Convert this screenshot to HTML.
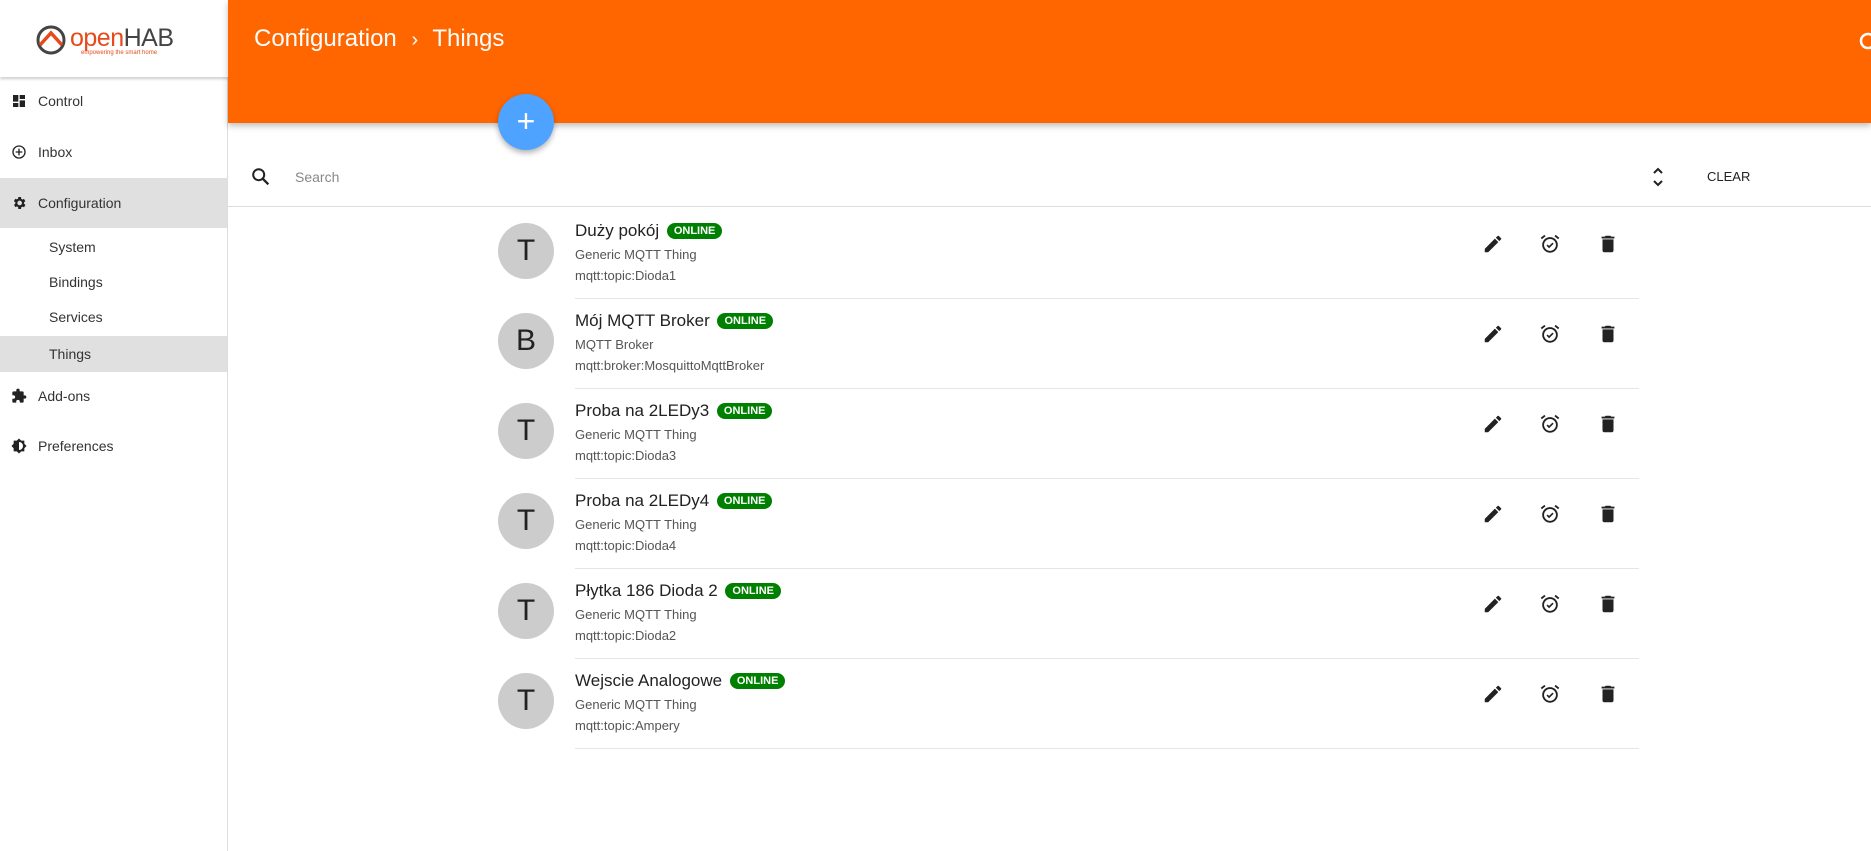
<!DOCTYPE html>
<html><head><meta charset="utf-8"><style>
*{box-sizing:border-box;margin:0;padding:0}
body{width:1871px;height:851px;overflow:hidden;background:#fff;font-family:"Liberation Sans",sans-serif;position:relative;color:#212121}
.abs{position:absolute}
#side{left:0;top:0;width:228px;height:851px;border-right:1px solid #ddd;background:#fff}
#logo{left:0;top:0;width:228px;height:77px;box-shadow:0 2px 3px rgba(0,0,0,.2);background:#fff}
.si{position:absolute;left:0;width:227px;font-size:14px;color:#333;display:flex;align-items:center}
.si svg{position:absolute;left:11px}
.si span{position:absolute;left:38px}
.sub span{left:49px}
#hdr{left:228px;top:0;width:1643px;height:123px;background:#ff6600;box-shadow:0 3px 6px rgba(0,0,0,.25)}
#title{left:254px;top:25px;color:#fff;font-size:24px;font-weight:300}
#fab{left:498px;top:94px;width:56px;height:56px;border-radius:50%;background:#4da3ff;box-shadow:0 3px 6px rgba(0,0,0,.3);color:#fff;font-size:32px;text-align:center;line-height:54px;font-weight:300}
.row{position:absolute;left:498px;width:1141px;height:90px}
.av{position:absolute;left:0;top:14px;width:56px;height:56px;border-radius:50%;background:#ccc;color:#222;font-size:30px;text-align:center;line-height:56px;font-weight:300}
.t{position:absolute;left:77px;top:12px;font-size:17px;color:#222;white-space:nowrap}
.b{display:inline-block;background:#008000;color:#fff;font-size:11px;font-weight:bold;border-radius:9px;padding:2px 7px;vertical-align:2px;margin-left:3px}
.s1{position:absolute;left:77px;top:38px;font-size:13px;color:#555}
.s2{position:absolute;left:77px;top:59px;font-size:13px;color:#555}
.ln{position:absolute;left:77px;right:0;bottom:0;height:1px;background:#e6e6e6}
.ic{position:absolute;top:24px}
</style></head><body>
<div id="side" class="abs">
<div id="logo" class="abs">
<svg class="abs" style="left:35px;top:24px" width="32" height="32" viewBox="0 0 32 32"><circle cx="16" cy="16" r="13" fill="none" stroke="#444" stroke-width="3"/><path d="M5 21 L16 9 L27 21" fill="none" stroke="#e64a19" stroke-width="3.5"/></svg>
<div class="abs" style="left:70px;top:24px;font-size:25px;color:#444;letter-spacing:-0.5px"><span style="color:#e64a19">open</span>HAB</div>
<div class="abs" style="left:81px;top:50px;font-size:6px;color:#e64a19">empowering the smart home</div>
</div>
<div class="si" style="top:88px;height:26px"><svg width="16" height="16" viewBox="0 0 24 24"><path d="M3 13h8V3H3zm0 8h8v-6H3zm10 0h8V11h-8zm0-18v6h8V3z" fill="#222"/></svg><span>Control</span></div>
<div class="si" style="top:139px;height:26px"><svg width="16" height="16" viewBox="0 0 24 24"><circle cx="12" cy="12" r="9" fill="none" stroke="#222" stroke-width="2"/><path d="M12 7v10M7 12h10" stroke="#222" stroke-width="2"/></svg><span>Inbox</span></div>
<div class="si" style="top:178px;height:50px;background:#e0e0e0"><svg width="16" height="16" viewBox="0 0 24 24"><path d="M19.4 13a7.5 7.5 0 0 0 0-2l2.1-1.6-2-3.5-2.5 1a7 7 0 0 0-1.7-1L15 3h-4l-.4 2.6a7 7 0 0 0-1.700 1l-2.5-1-2 3.5L6.6 11a7.5 7.5 0 0 0 0 2l-2.1 1.6 2 3.5 2.5-1a7 7 0 0 0 1.7 1L11 21h4l.4-2.6a7 7 0 0 0 1.7-1l2.5 1 2-3.5zM13 15.5a3.5 3.5 0 1 1 0-7 3.5 3.5 0 0 1 0 7z" fill="#222"/></svg><span>Configuration</span></div>
<div class="si sub" style="top:234px;height:26px"><span>System</span></div>
<div class="si sub" style="top:269px;height:26px"><span>Bindings</span></div>
<div class="si sub" style="top:304px;height:26px"><span>Services</span></div>
<div class="si sub" style="top:336px;height:36px;background:#e0e0e0"><span>Things</span></div>
<div class="si" style="top:383px;height:26px"><svg width="16" height="16" viewBox="0 0 24 24"><path d="M20.5 11H19V7a2 2 0 0 0-2-2h-4V3.5a2.5 2.5 0 0 0-5 0V5H4a2 2 0 0 0-2 2v3.8h1.5a2.7 2.7 0 0 1 0 5.4H2V20a2 2 0 0 0 2 2h3.8v-1.5a2.7 2.7 0 0 1 5.4 0V22H17a2 2 0 0 0 2-2v-4h1.5a2.5 2.5 0 0 0 0-5z" fill="#222"/></svg><span>Add-ons</span></div>
<div class="si" style="top:433px;height:26px"><svg width="16" height="16" viewBox="0 0 24 24"><path d="M20 8.7V4h-4.7L12 .7 8.7 4H4v4.7L.7 12 4 15.3V20h4.7l3.3 3.3 3.3-3.3H20v-4.7l3.3-3.3zM12 18V6a6 6 0 0 1 0 12z" fill="#222"/></svg><span>Preferences</span></div>
</div>
<div id="hdr" class="abs"></div>
<div id="title" class="abs">Configuration <span style="margin:0 8px;font-size:20px">›</span> Things</div>
<svg class="abs" style="left:1858px;top:31px" width="20" height="20" viewBox="0 0 20 20"><circle cx="10" cy="10" r="7" fill="none" stroke="#fff" stroke-width="2.5"/></svg>
<div id="fab" class="abs">+</div>
<svg class="abs" style="left:250px;top:166px" width="22" height="22" viewBox="0 0 24 24"><circle cx="9.5" cy="9.5" r="6" fill="none" stroke="#222" stroke-width="2.2"/><path d="M14 14l6 6" stroke="#222" stroke-width="2.5"/></svg>
<div class="abs" style="left:295px;top:169px;font-size:14px;color:#888">Search</div>
<svg class="abs" style="left:1650px;top:166px" width="16" height="22" viewBox="0 0 16 22"><path d="M4 7l4-4 4 4M4 15l4 4 4-4" fill="none" stroke="#222" stroke-width="2"/></svg>
<div class="abs" style="left:1707px;top:169px;font-size:13px;color:#222">CLEAR</div>
<div class="abs" style="left:228px;top:206px;width:1643px;height:1px;background:#ddd"></div>

<div id="rows"></div>
<script>
var d=[["Duży pokój","Generic MQTT Thing","mqtt:topic:Dioda1","T"],["Mój MQTT Broker","MQTT Broker","mqtt:broker:MosquittoMqttBroker","B"],["Proba na 2LEDy3","Generic MQTT Thing","mqtt:topic:Dioda3","T"],["Proba na 2LEDy4","Generic MQTT Thing","mqtt:topic:Dioda4","T"],["Płytka 186 Dioda 2","Generic MQTT Thing","mqtt:topic:Dioda2","T"],["Wejscie Analogowe","Generic MQTT Thing","mqtt:topic:Ampery","T"]];
var h="";
d.forEach(function(r,i){
h+='<div class="row" style="top:'+(209+i*90)+'px"><div class="av">'+r[3]+'</div><div class="t">'+r[0]+' <span class="b">ONLINE</span></div><div class="s1">'+r[1]+'</div><div class="s2">'+r[2]+'</div><div class="ln"></div>'+
'<svg class="ic" style="left:984px" width="22" height="22" viewBox="0 0 24 24"><path d="M3 17.25V21h3.75L17.81 9.94l-3.75-3.75zM20.71 7.04a1 1 0 0 0 0-1.41l-2.34-2.34a1 1 0 0 0-1.41 0l-1.83 1.830 3.75 3.75z" fill="#222"/></svg>'+
'<svg class="ic" style="left:1041px" width="22" height="22" viewBox="0 0 24 24"><circle cx="12" cy="13" r="7.5" fill="none" stroke="#222" stroke-width="2"/><path d="M2.5 6L6.5 2.8M21.5 6L17.5 2.8" stroke="#222" stroke-width="2"/><path d="M8.8 13.2l2.2 2.2 4.3-4.3" fill="none" stroke="#222" stroke-width="1.8"/></svg>'+
'<svg class="ic" style="left:1099px" width="22" height="22" viewBox="0 0 24 24"><path d="M6 19a2 2 0 0 0 2 2h8a2 2 0 0 0 2-2V7H6zM19 4h-3.5l-1-1h-5l-1 1H5v2h14z" fill="#222"/></svg></div>';
});
document.getElementById('rows').innerHTML=h;
</script>
</body></html>
